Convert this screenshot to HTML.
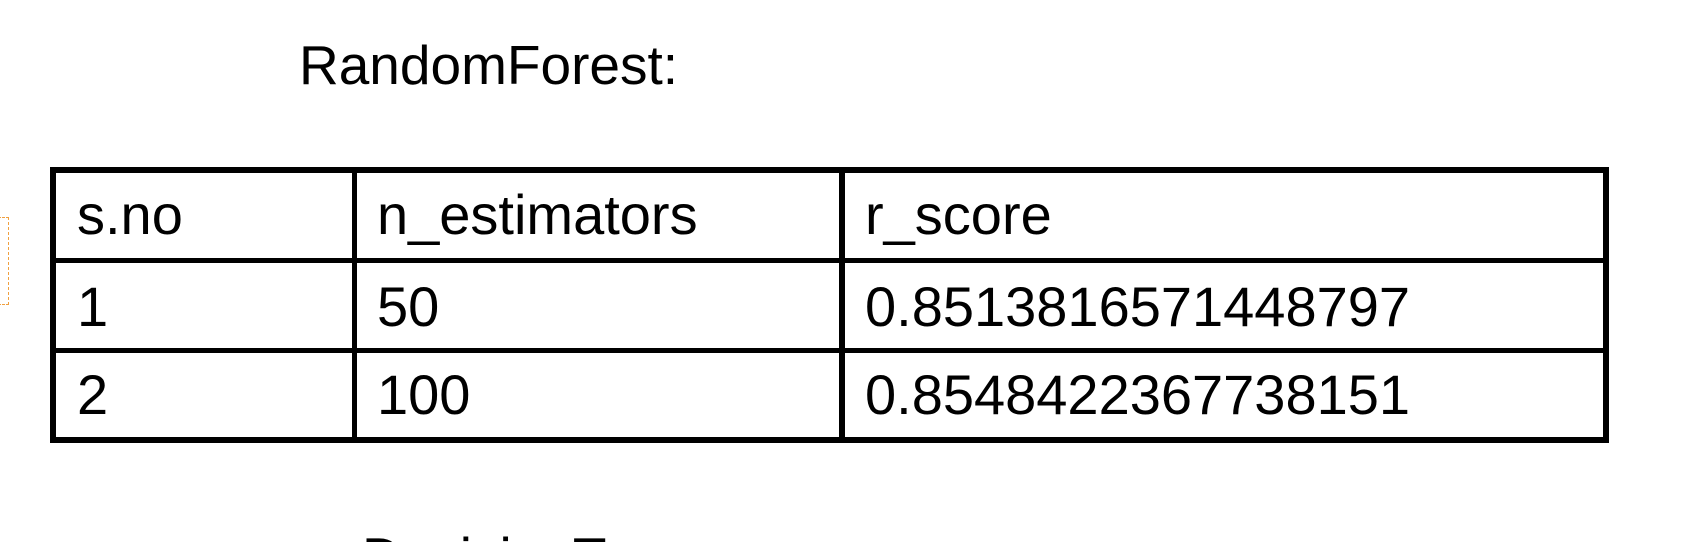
<!DOCTYPE html>
<html style="margin:0;width:1684px;height:542px;overflow:hidden"><head><meta charset="utf-8"><style>
body{margin:0;width:1684px;height:542px;overflow:hidden;background:#fff;font-family:"Liberation Sans",Arial,sans-serif;color:#000}
#w{position:relative;width:1684px;height:542px;overflow:hidden}
.t{position:absolute;font-size:56px;line-height:56px;white-space:nowrap}
.b{position:absolute;background:#000}
</style></head><body><div id="w">
<div style="position:absolute;left:-2px;top:217px;width:9px;height:86px;border:1px dashed #f0a040;"></div>
<div class="t" style="left:299px;top:37px;font-size:55px">RandomForest:</div>
<div class="b" style="left:50px;top:167px;width:1559px;height:6px"></div>
<div class="b" style="left:50px;top:258px;width:1559px;height:5px"></div>
<div class="b" style="left:50px;top:348px;width:1559px;height:5px"></div>
<div class="b" style="left:50px;top:437px;width:1559px;height:6px"></div>
<div class="b" style="left:50px;top:167px;width:6px;height:276px"></div>
<div class="b" style="left:352px;top:167px;width:5px;height:276px"></div>
<div class="b" style="left:839px;top:167px;width:6px;height:276px"></div>
<div class="b" style="left:1603px;top:167px;width:6px;height:276px"></div>
<div class="t" style="left:77px;top:187px">s.no</div>
<div class="t" style="left:377px;top:187px">n_estimators</div>
<div class="t" style="left:865px;top:187px">r_score</div>
<div class="t" style="left:77px;top:279px">1</div>
<div class="t" style="left:377px;top:279px">50</div>
<div class="t" style="left:865px;top:279px">0.8513816571448797</div>
<div class="t" style="left:77px;top:367px">2</div>
<div class="t" style="left:377px;top:367px">100</div>
<div class="t" style="left:865px;top:367px">0.8548422367738151</div>
<div class="t" style="left:362px;top:529px;font-size:55px">DecisionTree:</div>
</div></body></html>
